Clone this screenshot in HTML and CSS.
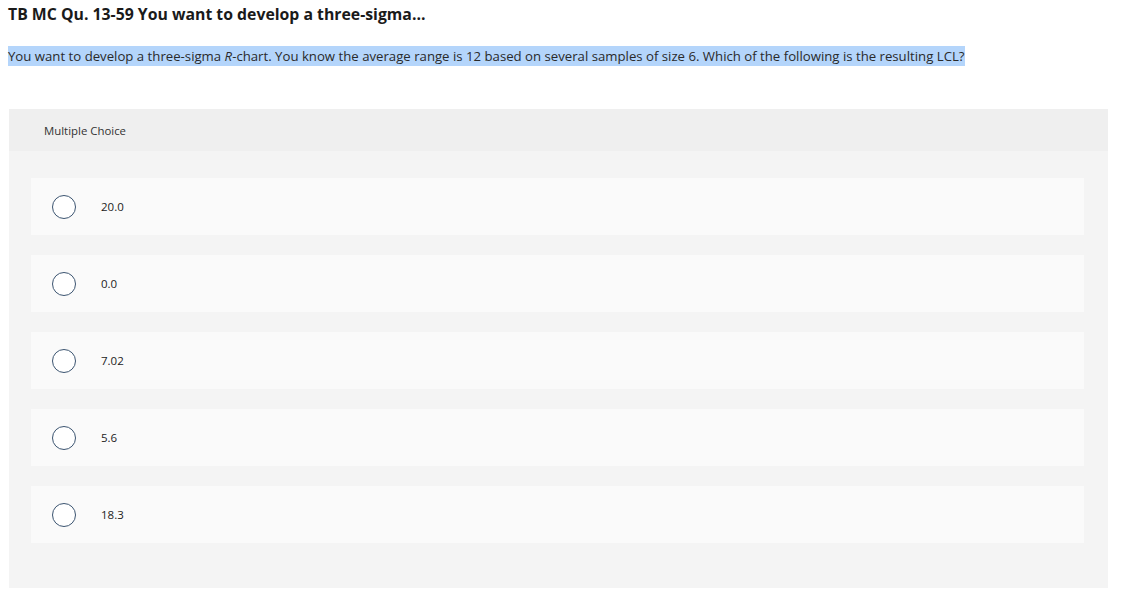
FILE: index.html
```html
<!DOCTYPE html>
<html>
<head>
<meta charset="utf-8">
<link rel="stylesheet" href="styles.css">
</head>
<body>
<h1 class="title">TB MC Qu. 13-59 You want to develop a three-sigma...</h1>
<p class="question"><span class="hl">You want to develop a three-sigma <i>R</i>-chart. You know the average range is 12 based on several samples of size 6. Which of the following is the resulting LCL?</span></p>
<div class="mc">
  <div class="mc-head">Multiple Choice</div>
  <div class="mc-body">
    <div class="opt"><span class="radio"></span><span class="label">20.0</span></div>
    <div class="opt"><span class="radio"></span><span class="label">0.0</span></div>
    <div class="opt"><span class="radio"></span><span class="label">7.02</span></div>
    <div class="opt"><span class="radio"></span><span class="label">5.6</span></div>
    <div class="opt"><span class="radio"></span><span class="label">18.3</span></div>
  </div>
</div>
</body>
</html>
```
FILE: styles.css
```css
body {
  margin: 0;
  padding: 0 8px;
  font-family: "Open Sans", "Liberation Sans", sans-serif;
  color: #222;
  background: #fff;
}
.title {
  margin: 0;
  padding-top: 4px;
  font-size: 15.8px;
  font-weight: 700;
  line-height: 20px;
  color: #1a1a1a;
}
.question {
  margin: 23px 0 0;
  font-size: 13.2px;
  line-height: 19px;
  color: #2a2a2a;
}
.hl {
  background: #b4d5fb;
  padding: 1px 0;
}
.mc {
  margin: 43px 18px 0 1px;
  background: #f4f4f4;
  padding-bottom: 45px;
}
.mc-head {
  background: #efefef;
  height: 42px;
  display: flex;
  align-items: center;
  padding-left: 35px;
  font-size: 11.4px;
  color: #333;
}
.mc-body {
  padding: 27px 24px 0 22px;
  display: flex;
  flex-direction: column;
  gap: 20px;
}
.opt {
  background: #fafafa;
  height: 57px;
  display: flex;
  align-items: center;
  padding-left: 21px;
}
.radio {
  box-sizing: border-box;
  width: 24px;
  height: 24px;
  border: 1.2px solid #3b5470;
  border-radius: 50%;
  background: #fff;
  flex: none;
}
.label {
  margin-left: 25px;
  font-size: 11.5px;
  color: #222;
}
```
